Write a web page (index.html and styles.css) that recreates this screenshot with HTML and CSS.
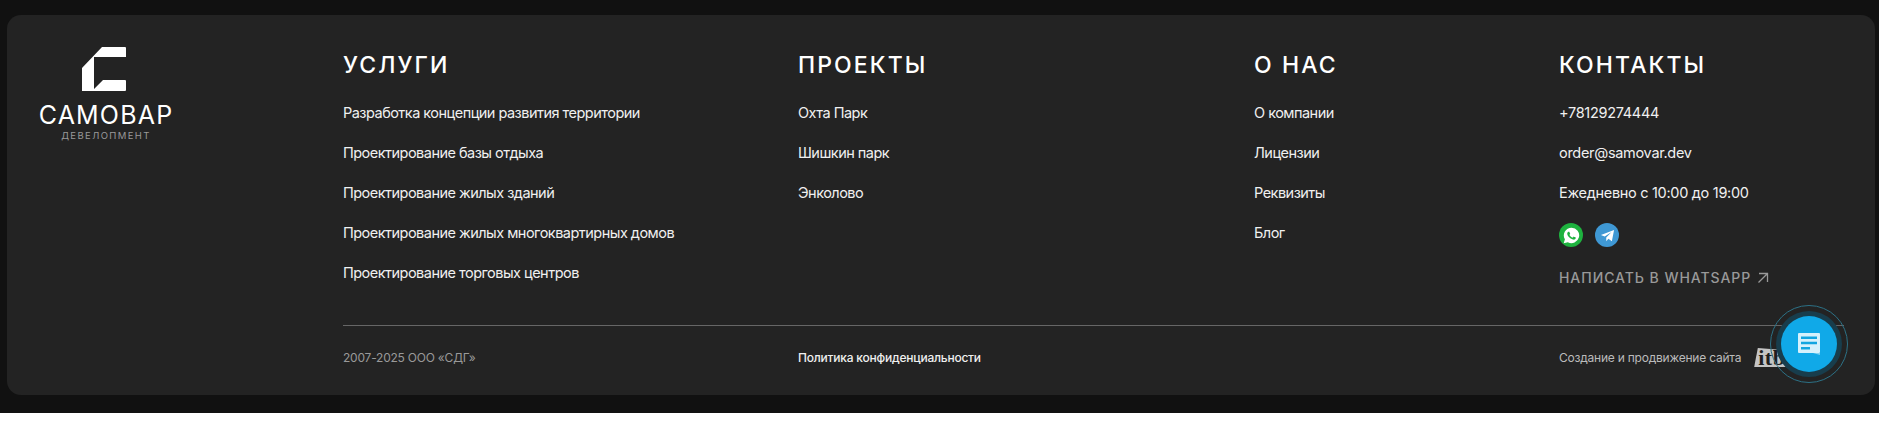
FILE: index.html
```html
<!DOCTYPE html>
<html lang="ru">
<head>
    <meta charset="UTF-8">
    <meta name="viewport" content="width=device-width, initial-scale=1.0">
    <title>Самовар Девелопмент</title>
    <link rel="stylesheet" href="styles.css">
</head>
<body>
    <footer class="site-footer">
        <div class="footer-card">
            <div class="footer-top">
                <a href="#" class="logo">
                    <svg class="logo-mark" viewBox="0 0 44 44" width="44" height="44">
                        <path fill="#fff" d="M20 0H43Q44 0 44 1V10H12V42L21 33H43Q44 33 44 34V43Q44 44 43 44H0V21Z"/>
                    </svg>
                    <span class="logo-name">САМОВАР</span>
                    <span class="logo-sub">ДЕВЕЛОПМЕНТ</span>
                </a>

                <nav class="footer-col">
                    <h3>Услуги</h3>
                    <a href="#">Разработка концепции развития территории</a>
                    <a href="#">Проектирование базы отдыха</a>
                    <a href="#">Проектирование жилых зданий</a>
                    <a href="#">Проектирование жилых многоквартирных домов</a>
                    <a href="#">Проектирование торговых центров</a>
                </nav>

                <nav class="footer-col">
                    <h3>Проекты</h3>
                    <a href="#">Охта Парк</a>
                    <a href="#">Шишкин парк</a>
                    <a href="#">Энколово</a>
                </nav>

                <nav class="footer-col">
                    <h3>О нас</h3>
                    <a href="#">О компании</a>
                    <a href="#">Лицензии</a>
                    <a href="#">Реквизиты</a>
                    <a href="#">Блог</a>
                </nav>

                <div class="footer-col footer-contacts">
                    <h3>Контакты</h3>
                    <a href="#">+78129274444</a>
                    <a href="#">order@samovar.dev</a>
                    <span class="work-time">Ежедневно с 10:00 до 19:00</span>
                    <div class="socials">
                        <a href="#" class="social social-wa" aria-label="WhatsApp">
                            <svg viewBox="0 0 24 24" width="17" height="17">
                                <path fill="#fff" d="M12.100 1A10.900 10.900 0 0 0 2.700 17.400L1 23l5.800-1.500A10.900 10.900 0 1 0 12.100 1z"/>
                                <path fill="#1eb23f" d="M17.500 14.600c-.3-.15-1.800-.9-2-1-.3-.1-.5-.15-.7.15-.2.3-.75 1-.95 1.170-.15.2-.35.2-.65.07-.3-.15-1.250-.45-2.400-1.500-.9-.8-1.500-1.750-1.650-2.050-.17-.3 0-.45.13-.6.13-.15.3-.35.45-.5.15-.2.2-.3.3-.5.1-.2.05-.4-.02-.55-.08-.15-.67-1.600-.92-2.200-.24-.6-.5-.5-.67-.5h-.57c-.2 0-.5.07-.8.37-.27.3-1.050 1-1.050 2.500s1.070 2.900 1.220 3.070c.15.2 2.100 3.200 5.100 4.500.7.3 1.250.5 1.700.62.7.23 1.350.2 1.850.12.570-.1 1.770-.72 2-1.400.25-.7.25-1.300.17-1.400-.07-.13-.27-.2-.57-.37z"/>
                            </svg>
                        </a>
                        <a href="#" class="social social-tg" aria-label="Telegram">
                            <svg viewBox="0 0 24 24" width="15" height="15">
                                <path fill="#fff" d="M22.500 3 1.500 11.200l6 2.300L18.500 6.500 10 15v6l3.500-3.700 5.500 4z"/>
                            </svg>
                        </a>
                    </div>
                    <a href="#" class="write-link">Написать в WhatsApp
                        <svg viewBox="0 0 12 12" width="12" height="12">
                            <path fill="none" stroke="currentColor" stroke-width="1.300" d="M2 1.500h8.500V10M10.500 1.500 1.500 10.500"/>
                        </svg>
                    </a>
                </div>
            </div>

            <div class="footer-bottom">
                <span class="copyright">2007-2025 ООО «СДГ»</span>
                <a href="#" class="policy">Политика конфиденциальности</a>
                <div class="made-by">
                    <span>Создание и продвижение сайта</span>
                    <span class="itb">itb</span>
                </div>
            </div>
        </div>

        <button class="chat-btn" aria-label="Чат">
            <svg viewBox="0 0 22 22" width="22" height="22">
                <path fill="#d6f1fc" d="M1 0h20q1 0 1 1v18q0 1-1 1H1q-1 0-1-1V1q0-1 1-1z"/>
                <path fill="#7fd2f3" d="M15 20h7v2z"/>
                <path fill="#12a5e0" d="M3 3.500h16v2.500H3zM3 8.700h16v2.500H3zM3 14h9v2.500H3z"/>
            </svg>
        </button>
    </footer>
</body>
</html>
```

FILE: styles.css
```css
body {
    margin: 0;
    background-color: #fff;
    font-family: Inter, "Noto Sans", "Liberation Sans", sans-serif;
    color: #f0f0f0;
}

a {
    color: inherit;
    text-decoration: none;
}

/* --- footer --- */
.site-footer {
    position: relative;
    height: 413px;
    box-sizing: border-box;
    padding: 15px 4px 18px 7px;
    background-color: #111;
}

.footer-card {
    height: 100%;
    box-sizing: border-box;
    padding: 32px 31px 0 32px;
    background-color: #232323;
    border-radius: 14px;
}

.footer-top {
    display: grid;
    grid-template-columns: 304px 455px 456px 305px 1fr;
    height: 278px;
}

/* --- logo --- */
.logo {
    display: flex;
    flex-direction: column;
    align-items: center;
    width: 134px;
}

.logo-mark {
    margin-right: 4px;
}

.logo-name {
    margin-top: 9px;
    font-size: 25px;
    line-height: 30px;
    letter-spacing: 1.2px;
    color: #fff;
}

.logo-sub {
    font-size: 9.5px;
    line-height: 12px;
    letter-spacing: 1.4px;
    color: #999;
}

/* --- columns --- */
.footer-col {
    display: flex;
    flex-direction: column;
    align-items: flex-start;
    font-size: 14.5px;
    line-height: 20px;
    letter-spacing: -0.52px;
}

.footer-contacts {
    letter-spacing: -0.3px;
}

.footer-col h3 {
    margin: 8px 0 28px;
    font-size: 23px;
    line-height: 20px;
    font-weight: 500;
    letter-spacing: 2.1px;
    text-transform: uppercase;
    color: #fff;
}

.footer-col > a,
.work-time {
    margin-bottom: 20px;
}

.socials {
    display: flex;
    gap: 12px;
}

.social {
    display: flex;
    align-items: center;
    justify-content: center;
    width: 24px;
    height: 24px;
    border-radius: 50%;
}

.social-wa {
    background-color: #1eb23f;
}

.social-tg {
    background-color: #3f98d4;
}

.footer-col > .write-link {
    display: flex;
    align-items: center;
    gap: 6px;
    margin: 21px 0 0;
    font-size: 14px;
    font-weight: 500;
    letter-spacing: 0.95px;
    text-transform: uppercase;
    color: #999;
}

/* --- bottom --- */
.footer-bottom {
    display: grid;
    grid-template-columns: 455px 761px 1fr;
    align-items: center;
    margin-left: 304px;
    height: 63px;
    border-top: 1px solid #666;
    font-size: 12px;
    letter-spacing: -0.22px;
}

.copyright {
    color: #999;
}

.policy {
    font-weight: 500;
    color: #f0f0f0;
}

.made-by {
    display: flex;
    align-items: center;
    gap: 13px;
    color: #bbb;
}

.itb {
    width: 36px;
    padding: 1px 0 0 4px;
    box-sizing: border-box;
    font-family: "Liberation Serif", serif;
    font-size: 22px;
    line-height: 18px;
    font-weight: bold;
    letter-spacing: 0.5px;
    color: #1e1e1e;
    background-color: #c4c4c4;
    clip-path: polygon(10% 0, 100% 14%, 100% 100%, 0 100%);
}

/* --- chat button --- */
.chat-btn {
    position: absolute;
    left: 1781px;
    top: 316px;
    display: flex;
    align-items: center;
    justify-content: center;
    width: 56px;
    height: 56px;
    padding: 0;
    border: 0;
    border-radius: 50%;
    background-color: #10a9e8;
    box-shadow: 0 0 0 5px #183d4c;
}

.chat-btn::after {
    content: "";
    position: absolute;
    inset: -11px;
    border: 1px solid #2c7186;
    border-radius: 50%;
}
```
